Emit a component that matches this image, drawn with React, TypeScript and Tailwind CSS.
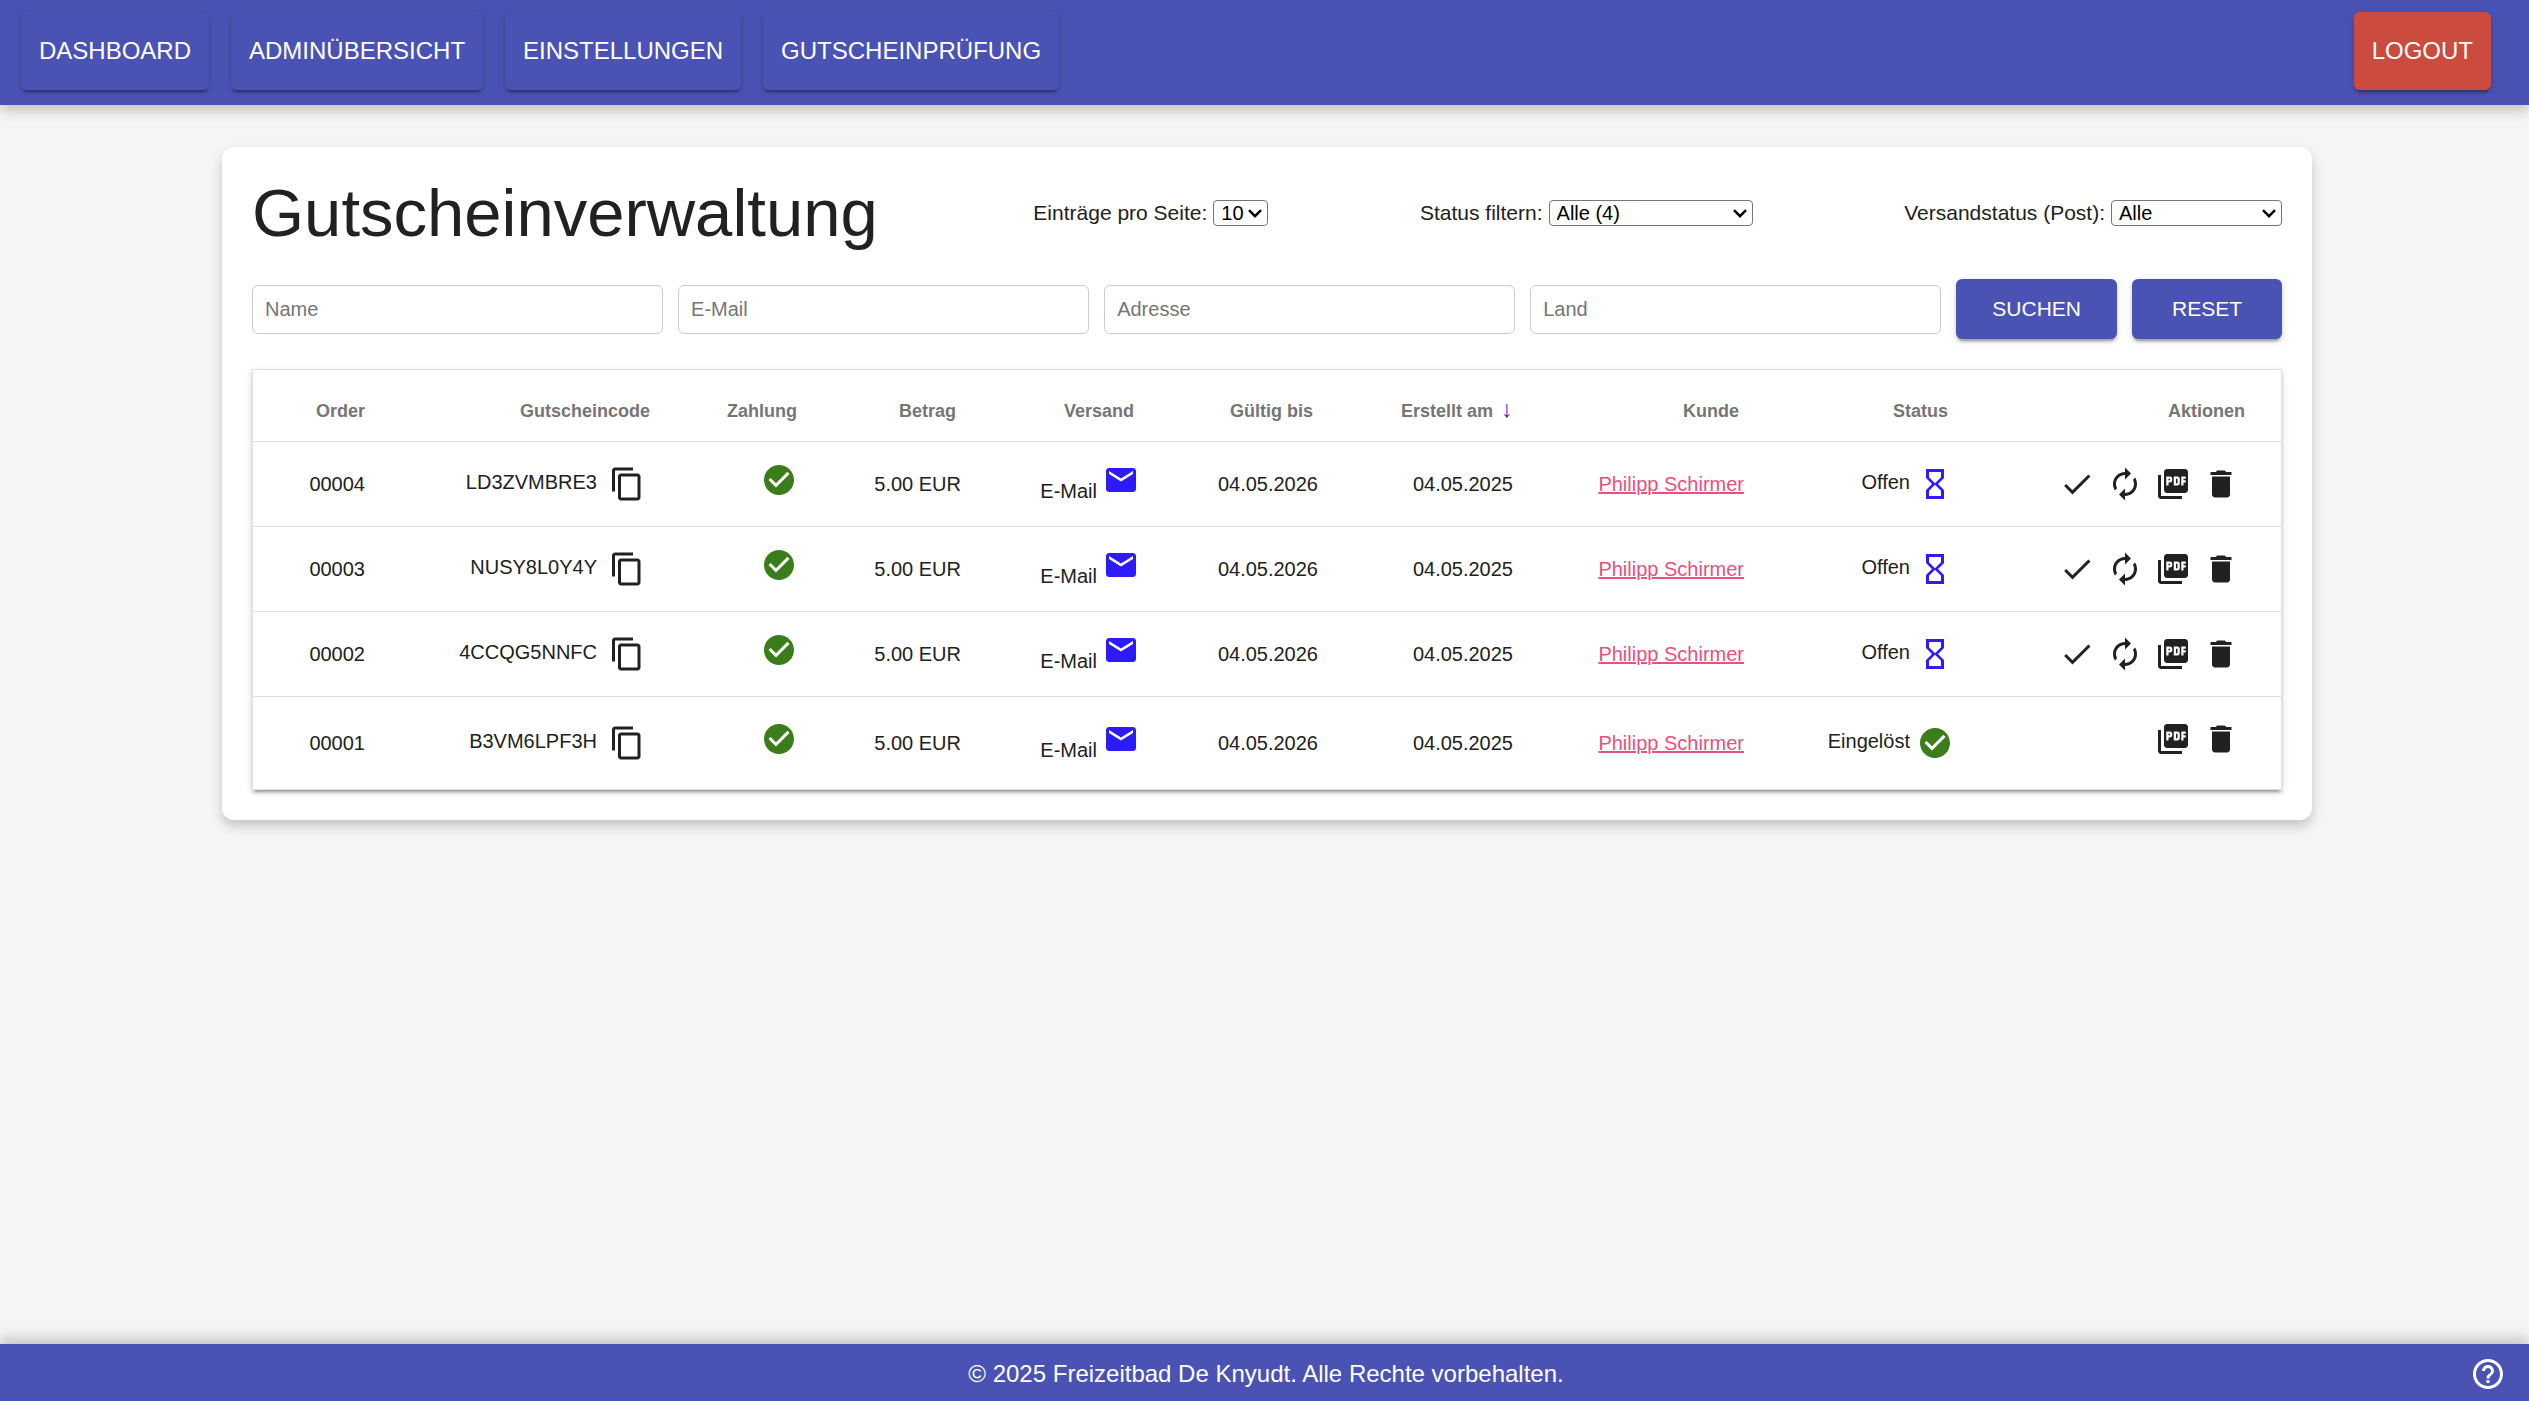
import React from "react";
import {
  MdAutorenew,
  MdCheck,
  MdCheckCircle,
  MdContentCopy,
  MdDelete,
  MdEmail,
  MdHelpOutline,
  MdHourglassEmpty,
  MdPictureAsPdf,
} from "react-icons/md";

type Voucher = {
  order: string;
  code: string;
  redeemed: boolean;
};

const vouchers: Voucher[] = [
  { order: "00004", code: "LD3ZVMBRE3", redeemed: false },
  { order: "00003", code: "NUSY8L0Y4Y", redeemed: false },
  { order: "00002", code: "4CCQG5NNFC", redeemed: false },
  { order: "00001", code: "B3VM6LPF3H", redeemed: true },
];

const navItems = ["DASHBOARD", "ADMINÜBERSICHT", "EINSTELLUNGEN", "GUTSCHEINPRÜFUNG"];

const raised =
  "shadow-[0_3px_3px_0_rgba(0,0,0,0.14),0_5px_2px_-3px_rgba(0,0,0,0.2),0_2px_8px_0_rgba(0,0,0,0.12)]";

function FilterSelect({
  id,
  label,
  options,
  width,
}: {
  id: string;
  label: string;
  options: string[];
  width: string;
}) {
  return (
    <div className="flex items-center gap-[6px]">
      <label htmlFor={id} className="text-[21px] leading-[30px]">
        {label}
      </label>
      <div className="relative flex">
        <select
          id={id}
          className={`${width} h-[26px] appearance-none rounded-[4px] border border-[#767676] bg-white pl-[7px] text-[20px] leading-[24px] text-black`}
        >
          {options.map((o) => (
            <option key={o}>{o}</option>
          ))}
        </select>
        <svg
          className="pointer-events-none absolute right-[6px] top-[9px]"
          width="14"
          height="9"
          viewBox="0 0 14 9"
          fill="none"
          stroke="#000"
          strokeWidth="2.4"
        >
          <path d="M1 1.2 7 7.2 13 1.2" />
        </svg>
      </div>
    </div>
  );
}

function HeaderCell({ children, pad = "pr-[32px]" }: { children: React.ReactNode; pad?: string }) {
  return (
    <th
      scope="col"
      className={`${pad} h-[71px] whitespace-nowrap pb-[18px] text-right align-bottom text-[18px] font-bold leading-[24px] text-[#757575]`}
    >
      {children}
    </th>
  );
}

function Cell({ children, pad = "pr-[27px]" }: { children: React.ReactNode; pad?: string }) {
  return (
    <td className={`${pad} whitespace-nowrap border-t border-[#e0e0e0] text-right align-middle`}>
      {children}
    </td>
  );
}

function VoucherRow({ v }: { v: Voucher }) {
  return (
    <tr className={v.redeemed ? "h-[93px]" : "h-[85px]"}>
      <Cell>{v.order}</Cell>
      <Cell>
        <div className="flex items-start justify-end gap-1">
          <span className="leading-[32px]">{v.code}</span>
          <button type="button" aria-label="Code kopieren" className="pl-[8px] pr-[10px]">
            <MdContentCopy size={36} />
          </button>
        </div>
      </Cell>
      <Cell>
        <div className="flex h-[44px] items-start justify-end">
          <MdCheckCircle size={36} className="text-[#3c7d1b]" />
        </div>
      </Cell>
      <Cell>5.00 EUR</Cell>
      <Cell>
        <div className="flex h-[44px] items-start justify-end gap-[6px]">
          <span className="self-end">E-Mail</span>
          <MdEmail size={36} className="text-[#2d1bfc]" />
        </div>
      </Cell>
      <Cell>04.05.2026</Cell>
      <Cell>04.05.2025</Cell>
      <Cell>
        <a href="#kunde" className="text-[#e8507f] underline">
          Philipp Schirmer
        </a>
      </Cell>
      <Cell>
        <div className="flex items-start justify-end gap-[7px]">
          <span className="leading-[32px]">{v.redeemed ? "Eingelöst" : "Offen"}</span>
          {v.redeemed ? (
            <MdCheckCircle size={36} className="text-[#3c7d1b]" />
          ) : (
            <MdHourglassEmpty size={36} className="text-[#2d1bfc]" />
          )}
        </div>
      </Cell>
      <Cell pad="pr-[36px]">
        <div className={`flex items-start justify-end ${v.redeemed ? "h-[44px]" : ""}`}>
          {!v.redeemed && (
            <>
              <button type="button" aria-label="Einlösen" className="px-[6px]">
                <MdCheck size={36} />
              </button>
              <button type="button" aria-label="Erneuern" className="px-[6px]">
                <MdAutorenew size={36} />
              </button>
            </>
          )}
          <button type="button" aria-label="PDF" className="px-[6px]">
            <MdPictureAsPdf size={36} />
          </button>
          <button type="button" aria-label="Löschen" className="px-[6px]">
            <MdDelete size={36} />
          </button>
        </div>
      </Cell>
    </tr>
  );
}

export default function App() {
  return (
    <div className="flex min-h-screen flex-col bg-[#f5f5f5] font-['Liberation_Sans',Arial,sans-serif] text-[20px] leading-[30px] text-[#212121]">
      <header className="flex items-start justify-between bg-[#4a53b3] pb-[15px] pl-[21px] pr-[38px] pt-[12px] shadow-[0_6px_12px_rgba(0,0,0,0.2)]">
        <nav className="flex gap-[22px]">
          {navItems.map((item) => (
            <button
              key={item}
              type="button"
              className={`${raised} h-[78px] rounded-[6px] bg-[#4a53b3] px-[18px] text-[24px] text-white`}
            >
              {item}
            </button>
          ))}
        </nav>
        <button
          type="button"
          className={`${raised} h-[78px] rounded-[6px] bg-[#cb4b3e] px-[18px] text-[24px] text-white`}
        >
          LOGOUT
        </button>
      </header>

      <main className="flex-1 pb-[30px] pl-[222px] pr-[217px] pt-[42px]">
        <section className="flex flex-col gap-[30px] rounded-[12px] bg-white p-[30px] shadow-[0_6px_12px_rgba(0,0,0,0.2)]">
          <div className="flex items-center justify-between">
            <h1 className="pr-1 text-[67px] leading-[72px]">Gutscheinverwaltung</h1>
            <FilterSelect id="per-page" label="Einträge pro Seite:" options={["10", "25", "50"]} width="w-[55px]" />
            <FilterSelect
              id="status"
              label="Status filtern:"
              options={["Alle (4)", "Offen (3)", "Eingelöst (1)"]}
              width="w-[204px]"
            />
            <FilterSelect
              id="shipping"
              label="Versandstatus (Post):"
              options={["Alle", "Versendet", "Nicht versendet"]}
              width="w-[171px]"
            />
          </div>

          <form className="flex items-center gap-[15px]" onSubmit={(e) => e.preventDefault()}>
            {["Name", "E-Mail", "Adresse", "Land"].map((p) => (
              <input
                key={p}
                type="text"
                placeholder={p}
                aria-label={p}
                className="h-[49px] min-w-0 flex-1 rounded-[6px] border border-[#cccccc] bg-white px-[12px] text-[20px] placeholder:text-[#757575]"
              />
            ))}
            <button
              type="submit"
              className={`${raised} h-[60px] min-w-[150px] rounded-[6px] bg-[#4a53b3] px-[36px] text-[21px] text-white`}
            >
              SUCHEN
            </button>
            <button
              type="reset"
              className={`${raised} h-[60px] min-w-[150px] rounded-[6px] bg-[#4a53b3] px-[36px] text-[21px] text-white`}
            >
              RESET
            </button>
          </form>

          <table
            className={`${raised} w-full table-fixed border-separate border-spacing-0 border border-[#e0e0e0] bg-white`}
          >
            <colgroup>
              <col className="w-[139px]" />
              <col className="w-[290px]" />
              <col className="w-[142px]" />
              <col className="w-[164px]" />
              <col className="w-[178px]" />
              <col className="w-[179px]" />
              <col className="w-[195px]" />
              <col className="w-[231px]" />
              <col className="w-[209px]" />
              <col className="w-[301px]" />
            </colgroup>
            <thead>
              <tr>
                <HeaderCell pad="pr-[27px]">Order</HeaderCell>
                <HeaderCell>Gutscheincode</HeaderCell>
                <HeaderCell pad="pr-[27px]">Zahlung</HeaderCell>
                <HeaderCell>Betrag</HeaderCell>
                <HeaderCell>Versand</HeaderCell>
                <HeaderCell>Gültig bis</HeaderCell>
                <HeaderCell pad="pr-[27px]">
                  Erstellt am{" "}
                  <span className="pl-[3px] text-[24px] font-normal leading-none text-[#3f2fc0]">↓</span>
                </HeaderCell>
                <HeaderCell>Kunde</HeaderCell>
                <HeaderCell>Status</HeaderCell>
                <HeaderCell pad="pr-[36px]">Aktionen</HeaderCell>
              </tr>
            </thead>
            <tbody>
              {vouchers.map((v) => (
                <VoucherRow key={v.order} v={v} />
              ))}
            </tbody>
          </table>
        </section>
      </main>

      <footer className="relative flex h-[57px] items-center justify-center bg-[#4a53b3] pl-[3px] pt-[2px] text-[24px] text-white shadow-[0_-6px_12px_rgba(0,0,0,0.2)]">
        <p>© 2025 Freizeitbad De Knyudt. Alle Rechte vorbehalten.</p>
        <button type="button" aria-label="Hilfe" className="absolute right-[23px] top-[12px]">
          <MdHelpOutline size={36} />
        </button>
      </footer>
    </div>
  );
}
